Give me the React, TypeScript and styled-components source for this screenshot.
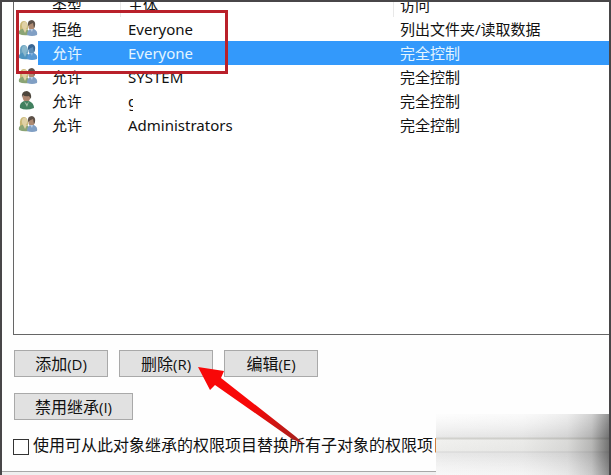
import React from "react";
import styled, { createGlobalStyle } from "styled-components";

const GlobalStyle = createGlobalStyle`
  * { box-sizing: border-box; }
  body {
    margin: 0;
    background: #fefefe;
    color: #111;
    font-family: "Noto Sans", "Noto Sans CJK SC", sans-serif;
  }
`;

const Window = styled.main`
  position: relative;
  display: flex;
  flex-direction: column;
  min-height: 100vh;
  border: 2px solid #484648;
  border-bottom: 0;
  overflow: hidden;
`;

const ListPanel = styled.section`
  flex: 1;
  margin-left: 11px;
  border: solid #666;
  border-width: 0 0 1px 1px;
  background: #fff;
  overflow: hidden;
`;

const Table = styled.table`
  width: 100%;
  margin-top: -9px;
  border-collapse: collapse;
  table-layout: fixed;
  font-size: 15px;
  line-height: 24px;
`;

const HeadCell = styled.th<{ $width?: number; $pad?: number; $divider?: boolean }>`
  width: ${(p) => (p.$width ? `${p.$width}px` : "auto")};
  height: 24px;
  padding: 0 0 0 ${(p) => p.$pad ?? 6}px;
  font-weight: 400;
  text-align: left;
  box-shadow: ${(p) => (p.$divider ? "inset -1px 0 #e8e8e8" : "none")};
`;

const Row = styled.tr<{ $selected?: boolean }>`
  color: ${(p) => (p.$selected ? "#e4f5ff" : "inherit")};
  td:not(:first-child) {
    background: ${(p) => (p.$selected ? "#3399fb" : "transparent")};
  }
`;

const Cell = styled.td<{ $pad?: number }>`
  height: 24px;
  padding: 0 0 0 ${(p) => p.$pad ?? 6}px;
  white-space: nowrap;
`;

const IconCell = styled.td`
  height: 24px;
  padding: 0 0 0 4px;
  svg { display: block; }
`;

const Masked = styled.span`
  display: block;
  width: 5px;
  overflow: hidden;
`;

const Actions = styled.section`
  display: flex;
  flex-direction: column;
  gap: 16px;
  padding: 15px 0 0 12px;
`;

const ButtonRow = styled.div`
  display: flex;
  gap: 11px;
`;

const Button = styled.button<{ $wide?: boolean }>`
  width: ${(p) => (p.$wide ? 119 : 94)}px;
  height: 27px;
  padding: 0;
  border: 1px solid #a9a9a9;
  background: #e1e1e1;
  color: inherit;
  font: 16px/24px "Open Sans", "Noto Sans CJK SC", sans-serif;
  white-space: nowrap;
`;

const Mnemonic = styled.span`
  font-size: 15px;
`;

const Option = styled.label`
  display: flex;
  align-items: center;
  gap: 4px;
  height: 24px;
  margin: 15px 0 12px 11px;
  font-size: 16px;
  line-height: 24px;
  white-space: nowrap;
`;

const OptionText = styled.span`
  padding-bottom: 4px;
`;

const Checkbox = styled.input`
  appearance: none;
  flex: none;
  width: 16px;
  height: 16px;
  margin: 0;
  border: 1px solid #333;
  background: #fff;
`;

const Footer = styled.footer`
  height: 4px;
  border-top: 1px solid #a8a8a8;
  background: #f0f0f0;
`;

const Highlight = styled.div`
  position: absolute;
  top: 8px;
  left: 14px;
  width: 212px;
  height: 64px;
  border: 3px solid #b9202a;
`;

const Arrow = styled.svg`
  position: absolute;
  left: 192px;
  bottom: 26px;
`;

const Smudge = styled.div`
  position: absolute;
  right: 0;
  bottom: 0;
  width: 173px;
  height: 61px;
  background:
    linear-gradient(to right, transparent 0%, rgba(90, 90, 90, 0.04) 50%, rgba(80, 80, 80, 0.14) 76%, rgba(65, 65, 65, 0.32) 90%, rgba(50, 50, 50, 0.66) 100%),
    linear-gradient(to bottom, #fbfbfb 0, #e8e8e8 23px, #d2d2ce 24px, #d2d2ce 25px, #f1f1ef 26px, #ececea 37px, #d6d6d6 38px, #e8e8e8 39px, #f4f4f4 61px);
  &::after {
    content: "";
    position: absolute;
    inset: 0;
    background: linear-gradient(to bottom, rgba(255, 255, 255, 0.5), transparent 40%, transparent 65%, rgba(255, 255, 255, 0.4));
    mask-image: linear-gradient(to right, #000 60%, rgba(0, 0, 0, 0.4));
  }
`;

function GroupIcon({ tinted }: { tinted?: boolean }) {
  const c = tinted
    ? { hair: "#68a2c0", faceA: "#8ab8cd", faceB: "#5f8fb8", dark: "#3b6794", bodyA: "#4f94be", bodyB: "#5898d2" }
    : { hair: "#c9b876", faceA: "#e0d1a6", faceB: "#ad8a72", dark: "#5d5148", bodyA: "#8ba475", bodyB: "#809fc4" };
  return (
    <svg width="20" height="18" viewBox="0 0 20 18" aria-hidden="true">
      <path d="M2 10Q1 1 6 1Q10 1 10 9L8 10Z" fill={c.hair} />
      <ellipse cx="6.5" cy="5.5" rx="2.6" ry="3.7" fill={c.faceA} />
      <path d="M1 14Q0 10 4 9L9 9Q12 11 11 15Q5 16 1 14Z" fill={c.bodyA} />
      <path d="M5 9L7 13L9 9Z" fill={c.faceA} />
      <ellipse cx="13.5" cy="5.5" rx="3.2" ry="4.4" fill={c.faceB} />
      <path d="M10 6Q9 0 14 0Q18 1 17 6L16 8L15 3Q12 4 10 6Z" fill={c.dark} />
      <path d="M9 15Q9 11 12 9L16 9Q20 11 19 15Q14 17 9 15Z" fill={c.bodyB} />
      <path d="M12 9L14 12L15 9Z" fill="#d5dfeb" opacity={tinted ? 0.4 : 0.7} />
    </svg>
  );
}

function PersonIcon() {
  return (
    <svg width="20" height="20" viewBox="0 0 20 20" aria-hidden="true">
      <ellipse cx="8.5" cy="6" rx="3.8" ry="5" fill="#ad8670" />
      <path d="M4 7Q3 0 9 0Q14 1 13 8L11 5Q7 6 5 4Z" fill="#4d463c" />
      <path d="M2 17Q1 12 6 10L11 10Q16 12 16 17Q8 20 2 17Z" fill="#42805f" />
      <path d="M6 10L9 13L11 10L9 16Z" fill="#a5c0ab" />
    </svg>
  );
}

type Entry = {
  type: string;
  principal: string;
  access: string;
  person?: boolean;
  selected?: boolean;
};

const entries: Entry[] = [
  { type: "拒绝", principal: "Everyone", access: "列出文件夹/读取数据" },
  { type: "允许", principal: "Everyone", access: "完全控制", selected: true },
  { type: "允许", principal: "SYSTEM", access: "完全控制" },
  { type: "允许", principal: "g", access: "完全控制", person: true },
  { type: "允许", principal: "Administrators", access: "完全控制" },
];

export default function App() {
  return (
    <>
      <GlobalStyle />
      <Window>
        <ListPanel>
          <Table>
            <thead>
              <tr>
                <HeadCell $width={24} aria-label="图标" />
                <HeadCell $width={83} $pad={14} $divider>类型</HeadCell>
                <HeadCell $width={273} $pad={7} $divider>主体</HeadCell>
                <HeadCell>访问</HeadCell>
              </tr>
            </thead>
            <tbody>
              {entries.map((e, i) => (
                <Row key={i} $selected={e.selected}>
                  <IconCell>{e.person ? <PersonIcon /> : <GroupIcon tinted={e.selected} />}</IconCell>
                  <Cell $pad={14}>{e.type}</Cell>
                  <Cell $pad={7}>{e.person ? <Masked>{e.principal}</Masked> : e.principal}</Cell>
                  <Cell>{e.access}</Cell>
                </Row>
              ))}
            </tbody>
          </Table>
        </ListPanel>
        <Actions>
          <ButtonRow>
            <Button type="button">添加<Mnemonic>(D)</Mnemonic></Button>
            <Button type="button">删除<Mnemonic>(R)</Mnemonic></Button>
            <Button type="button">编辑<Mnemonic>(E)</Mnemonic></Button>
          </ButtonRow>
          <ButtonRow>
            <Button type="button" $wide>禁用继承<Mnemonic>(I)</Mnemonic></Button>
          </ButtonRow>
        </Actions>
        <Option>
          <Checkbox type="checkbox" />
          <OptionText>使用可从此对象继承的权限项目替换所有子对象的权限项目</OptionText>
        </Option>
        <Footer />
        <Highlight />
        <Arrow width="114" height="84" viewBox="0 0 114 84" aria-hidden="true">
          <defs>
            <linearGradient id="arrowFill" x1="0" y1="0" x2="1" y2="1">
              <stop offset="0.5" stopColor="#f80808" />
              <stop offset="0.95" stopColor="#a8201c" />
            </linearGradient>
          </defs>
          <path d="M4 2L30 6L27 13L101 71L110 79L98 74L21 20L16 25Z" fill="url(#arrowFill)" />
        </Arrow>
        <Smudge />
      </Window>
    </>
  );
}
